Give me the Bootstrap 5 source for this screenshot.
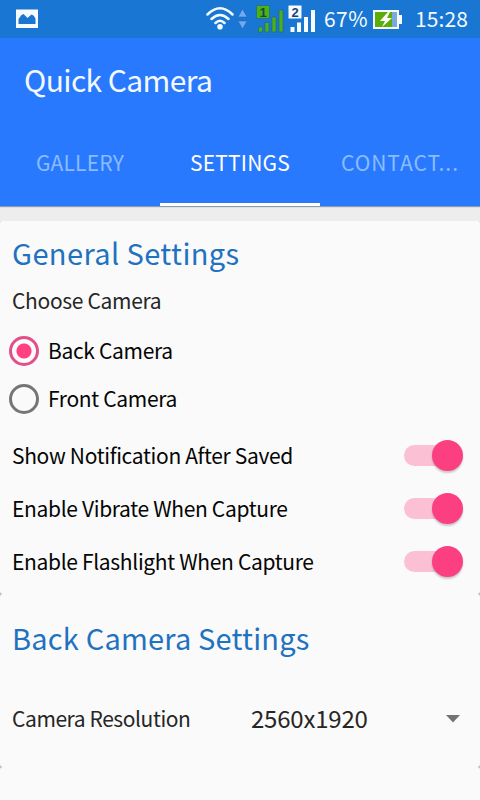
<!DOCTYPE html>
<html lang="en">
<head>
<meta charset="utf-8">
<meta name="viewport" content="width=device-width, initial-scale=1">
<title>Quick Camera</title>
<link href="https://cdn.jsdelivr.net/npm/bootstrap@5.3.0/dist/css/bootstrap.min.css" rel="stylesheet">
<style>
body{font-family:"Noto Sans CJK SC","Noto Sans",sans-serif;background:#ededed;color:#050505;font-size:21px;line-height:30px;letter-spacing:-.33px;height:800px;overflow:hidden}
svg{display:block;flex:none}
.status{height:38px;background:#1976d2;color:#f4fbff;padding:0 12px 0 16px;letter-spacing:0}
.status .s-text{font-size:21px;line-height:36px;height:38px}
.sim{margin-left:4px}
.sim-first{margin-left:9px}
.percent{margin-left:8px;letter-spacing:.5px}
.battery{margin:1px 0 0 5px}
.clock{margin-left:12px;letter-spacing:.1px}
.appbar{height:168px;background:#2979ff;box-shadow:0 1px 1px #8d99b0}
.app-title{height:85px;padding-left:24px;font-size:30px;line-height:82px;letter-spacing:-.6px;color:#f2faff}
.tabs{height:83px;letter-spacing:.2px}
.tabs .nav-link{height:83px;padding:0;line-height:79px;color:#8bbcff;border-radius:0;border-bottom:3px solid transparent;white-space:nowrap}
.tabs .nav-link.active{color:#fff;background:none;border-bottom-color:#fff}
.tabs .wide{letter-spacing:.98px}
.panel{background:#fafafa;border:0;border-radius:3px;padding:0 12px;color:inherit}
.panel-wrap{background:#b4b4b4}
.first{margin-top:15px;background:linear-gradient(#ddd 50%,#b4b4b4 50%)}
.general{height:373px}
.back{height:173px}
.rest{height:33px;border-radius:3px 3px 0 0}
.heading{font-size:29px;line-height:40px;color:#1f72c0;font-weight:400;letter-spacing:.4px;margin:11px 0 0}
.back .heading{margin-top:23px;letter-spacing:.2px}
.soft{color:#262626}
.prompt{margin-top:13px}
.choices{margin-top:12px}
.choice{height:48px;gap:9px;margin-left:-3px}
.choice span,.toggle-row>span{margin-top:-2px}
.choice .form-check-input{width:30px;height:30px;margin:0;border:3px solid #757575;background:#fafafa;flex:none}
.choice .form-check-input:checked{border-color:#e2508a;background:radial-gradient(circle,#ff4081 0 7px,#fafafa 8px)}
.toggles{margin-top:6px}
.toggle-row{height:53px}
.track{width:58px;height:21px;border-radius:11px;background:#fcc0d5;margin-right:6px}
.thumb{width:31px;height:31px;border-radius:50%;background:#fb3f80;box-shadow:0 2px 2px #0003;margin-right:-1px}
.resolution{margin-top:46px}
.res-label{letter-spacing:-.42px}
.res-value{font-size:24px;width:195px;letter-spacing:-.2px}
.caret-down{margin:2px 7px 0 0}
</style>
<script src="https://cdn.jsdelivr.net/npm/bootstrap@5.3.0/dist/js/bootstrap.bundle.min.js"></script>
</head>
<body>
<div class="status d-flex align-items-center">
  <svg width="22" height="20" viewBox="0 0 22 20"><path fill="#f7fcff" fill-rule="evenodd" d="M0 .500h22v18.500H0zM2.500 15h17v-5.500l-2-3-2-1-4 3.500-4-4-2 1-3 4z"/></svg>
  <svg class="ms-auto" width="28" height="26" viewBox="0 0 28 26"><g fill="none" stroke="#f4fbff" stroke-width="2.500" stroke-linecap="round"><path d="M1.500 8.500Q14 -4 26.500 8.500M5.500 13Q14 5 22.500 13M9.500 17Q14 12.500 18.500 17"/></g><circle cx="14" cy="20.800" r="2.800" fill="#f4fbff"/></svg>
  <svg class="ms-1" width="9" height="22" viewBox="0 0 9 22"><path fill="#71aaf0" stroke="#1766b8" stroke-width=".5" d="M0 9L4.500 1 9 9zM0 13h9L4.500 21z"/></svg>
  <svg class="sim-first" width="28" height="28" viewBox="0 0 28 28"><path fill="#4eb017" stroke="#176a8c" stroke-width=".7" d="M.5.500h13v13H.5zM2.500 22h4v5h-4zM9 17.500h4V27H9zM16 12h4v15h-4zM23 5h4v22h-4z"/><text x="7" y="12" text-anchor="middle" font-family="Liberation Sans" font-weight="700" font-size="13" fill="#124a45">1</text></svg>
  <svg class="sim" width="28" height="28" viewBox="0 0 28 28"><path fill="#f7fcff" d="M.5.500h13v13H.5zM2.500 22h4v5h-4zM9 17.500h4V27H9zM16 12h4v15h-4zM23 5h4v22h-4z"/><text x="7" y="12" text-anchor="middle" font-family="Liberation Sans" font-weight="700" font-size="13" fill="#174475">2</text></svg>
  <span class="s-text percent">67%</span>
  <svg class="battery" width="30" height="22" viewBox="0 0 30 22"><path fill="#f7fcff" d="M0 1h26v5h3v9h-3v5H0z"/><path fill="#5dad08" d="M2 3h17v15H2z"/><path fill="#78aada" d="M19 3h5v15h-5z"/><path fill="#fff" d="M15 3L7 12h5l-3 6 10-9h-5l3-6z"/></svg>
  <span class="s-text clock">15:28</span>
</div>
<header class="appbar position-relative">
  <div class="app-title">Quick Camera</div>
  <nav class="tabs nav row g-0 text-center">
    <a class="nav-link col-4">GALLERY</a>
    <a class="nav-link col-4 active">SETTINGS</a>
    <a class="nav-link col-4 wide">CONTACT...</a>
  </nav>
</header>
<main>
  <div class="panel-wrap first">
    <section class="card panel general">
      <h2 class="heading">General Settings</h2>
      <div class="soft prompt">Choose Camera</div>
      <div class="choices">
        <label class="choice d-flex align-items-center"><input class="form-check-input" type="radio" name="cam" checked><span>Back Camera</span></label>
        <label class="choice d-flex align-items-center"><input class="form-check-input" type="radio" name="cam"><span>Front Camera</span></label>
      </div>
      <div class="toggles">
        <div class="toggle-row d-flex align-items-center justify-content-between"><span>Show Notification After Saved</span><div class="track d-flex align-items-center justify-content-end"><div class="thumb"></div></div></div>
        <div class="toggle-row d-flex align-items-center justify-content-between"><span>Enable Vibrate When Capture</span><div class="track d-flex align-items-center justify-content-end"><div class="thumb"></div></div></div>
        <div class="toggle-row d-flex align-items-center justify-content-between"><span>Enable Flashlight When Capture</span><div class="track d-flex align-items-center justify-content-end"><div class="thumb"></div></div></div>
      </div>
    </section>
  </div>
  <div class="panel-wrap">
    <section class="card panel back">
      <h2 class="heading">Back Camera Settings</h2>
      <div class="soft resolution d-flex align-items-center"><span class="res-label">Camera Resolution</span><span class="res-value ms-auto">2560x1920</span><svg class="caret-down" width="15" height="8" viewBox="0 0 15 8"><path fill="#737373" d="M0 0h14L7 7.500z"/></svg></div>
    </section>
  </div>
  <div class="panel-wrap"><section class="card panel rest"></section></div>
</main>
</body>
</html>
